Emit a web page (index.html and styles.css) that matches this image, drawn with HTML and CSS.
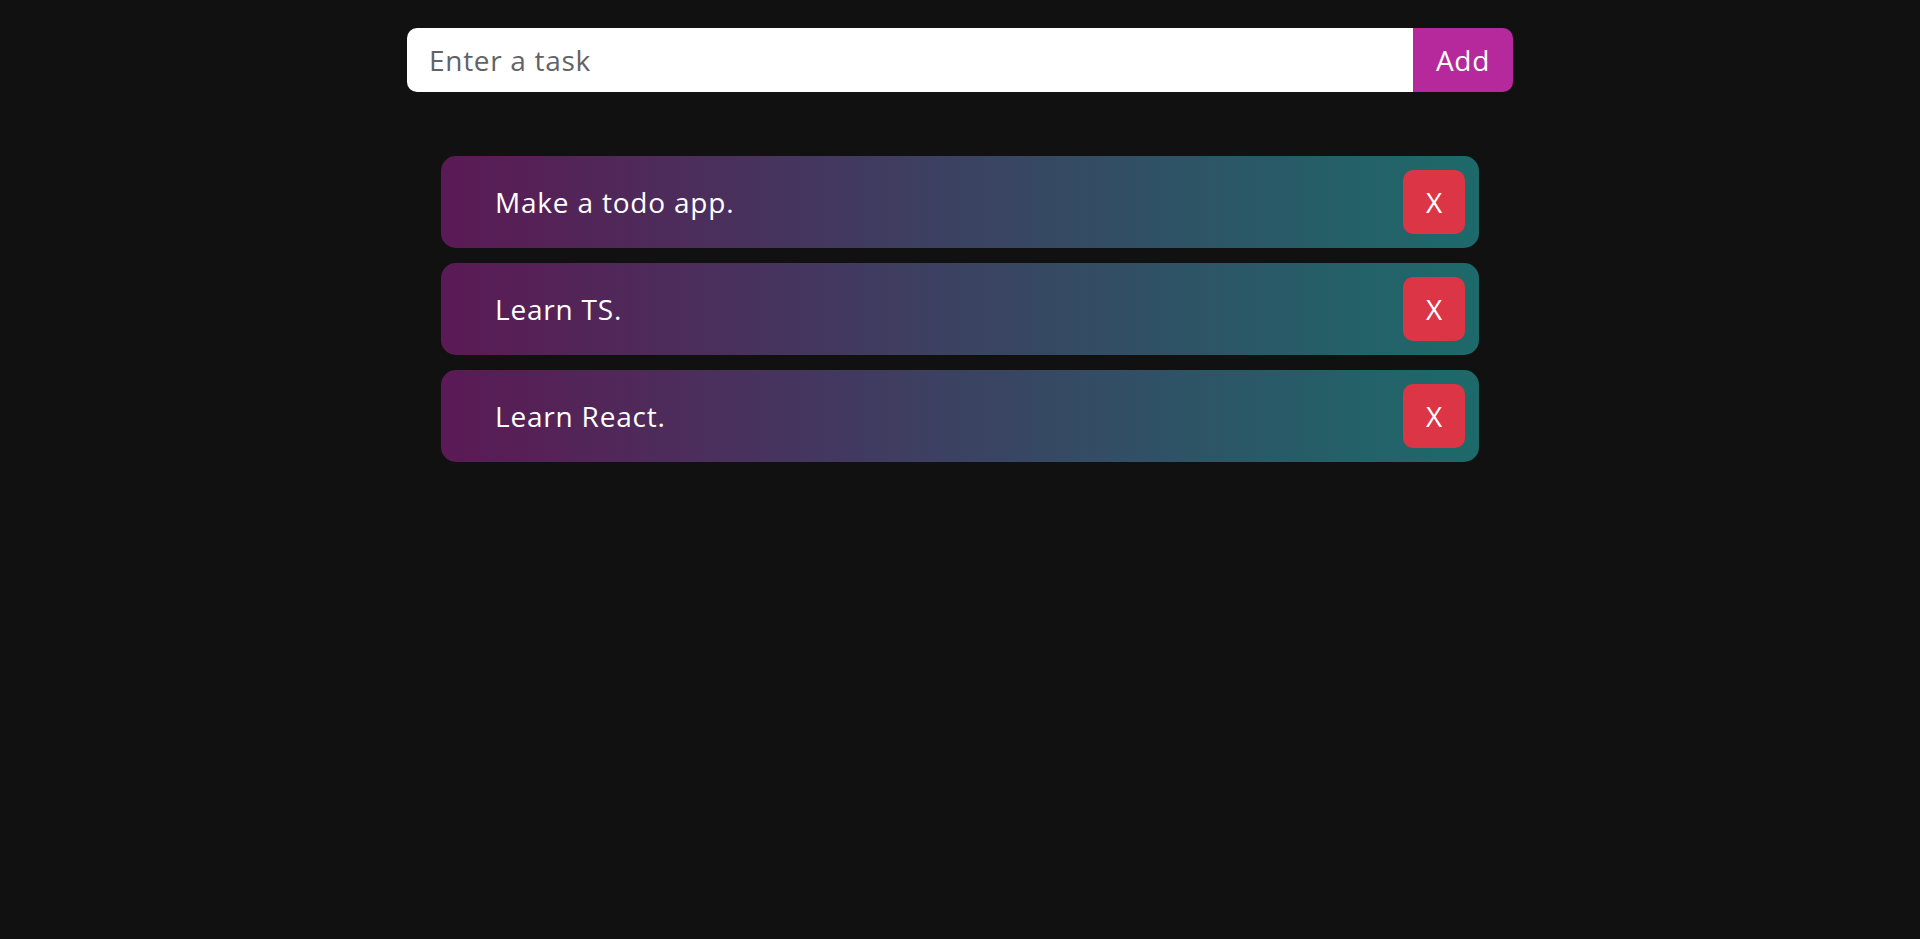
FILE: index.html
```html
<!DOCTYPE html>
<html lang="en">
<head>
<meta charset="utf-8">
<title>Todo</title>
<link rel="stylesheet" href="styles.css">
</head>
<body>
<main class="app">
  <form class="task-form">
    <input class="task-input" type="text" placeholder="Enter a task">
    <button class="add-btn" type="button">Add</button>
  </form>
  <ul class="todo-list">
    <li class="todo-item"><span class="todo-text">Make a todo app.</span><button class="del-btn" type="button">X</button></li>
    <li class="todo-item"><span class="todo-text">Learn TS.</span><button class="del-btn" type="button">X</button></li>
    <li class="todo-item"><span class="todo-text">Learn React.</span><button class="del-btn" type="button">X</button></li>
  </ul>
</main>
</body>
</html>
```
FILE: styles.css
```css
* { box-sizing: border-box; }
html, body { margin: 0; padding: 0; }
body {
  background: #111111;
  font-family: "Open Sans", "Liberation Sans", sans-serif;
  min-height: 100vh;
}
.app {
  display: flex;
  flex-direction: column;
  align-items: center;
  padding-top: 28px;
}
.task-form {
  display: flex;
  width: 1106px;
  height: 64px;
}
.task-input {
  flex: 1;
  border: none;
  border-radius: 10px 0 0 10px;
  background: #ffffff;
  padding: 0 22px;
  font-family: inherit;
  font-size: 28px;
  letter-spacing: 0.7px;
  color: #333;
  outline: none;
}
.task-input::placeholder { color: #5f6368; }
.add-btn {
  width: 100px;
  border: none;
  border-radius: 0 10px 10px 0;
  background: #b5299c;
  color: #ffffff;
  font-family: inherit;
  font-size: 28px;
  letter-spacing: 0.7px;
  padding: 0;
}
.todo-list {
  list-style: none;
  margin: 64px 0 0;
  padding: 0;
  width: 1038px;
  display: flex;
  flex-direction: column;
  gap: 15px;
}
.todo-item {
  display: flex;
  align-items: center;
  justify-content: space-between;
  height: 92px;
  padding: 14px 14px 14px 54px;
  border-radius: 15px;
  background: linear-gradient(90deg, #5b1a55 0%, #3b4262 50%, #1d6a6a 100%);
}
.todo-text {
  color: #ffffff;
  font-size: 28px;
  letter-spacing: 0.8px;
}
.del-btn {
  width: 62px;
  height: 64px;
  border: none;
  border-radius: 10px;
  background: #dc3545;
  color: #ffffff;
  font-family: inherit;
  font-size: 28px;
  padding: 0;
}
```
